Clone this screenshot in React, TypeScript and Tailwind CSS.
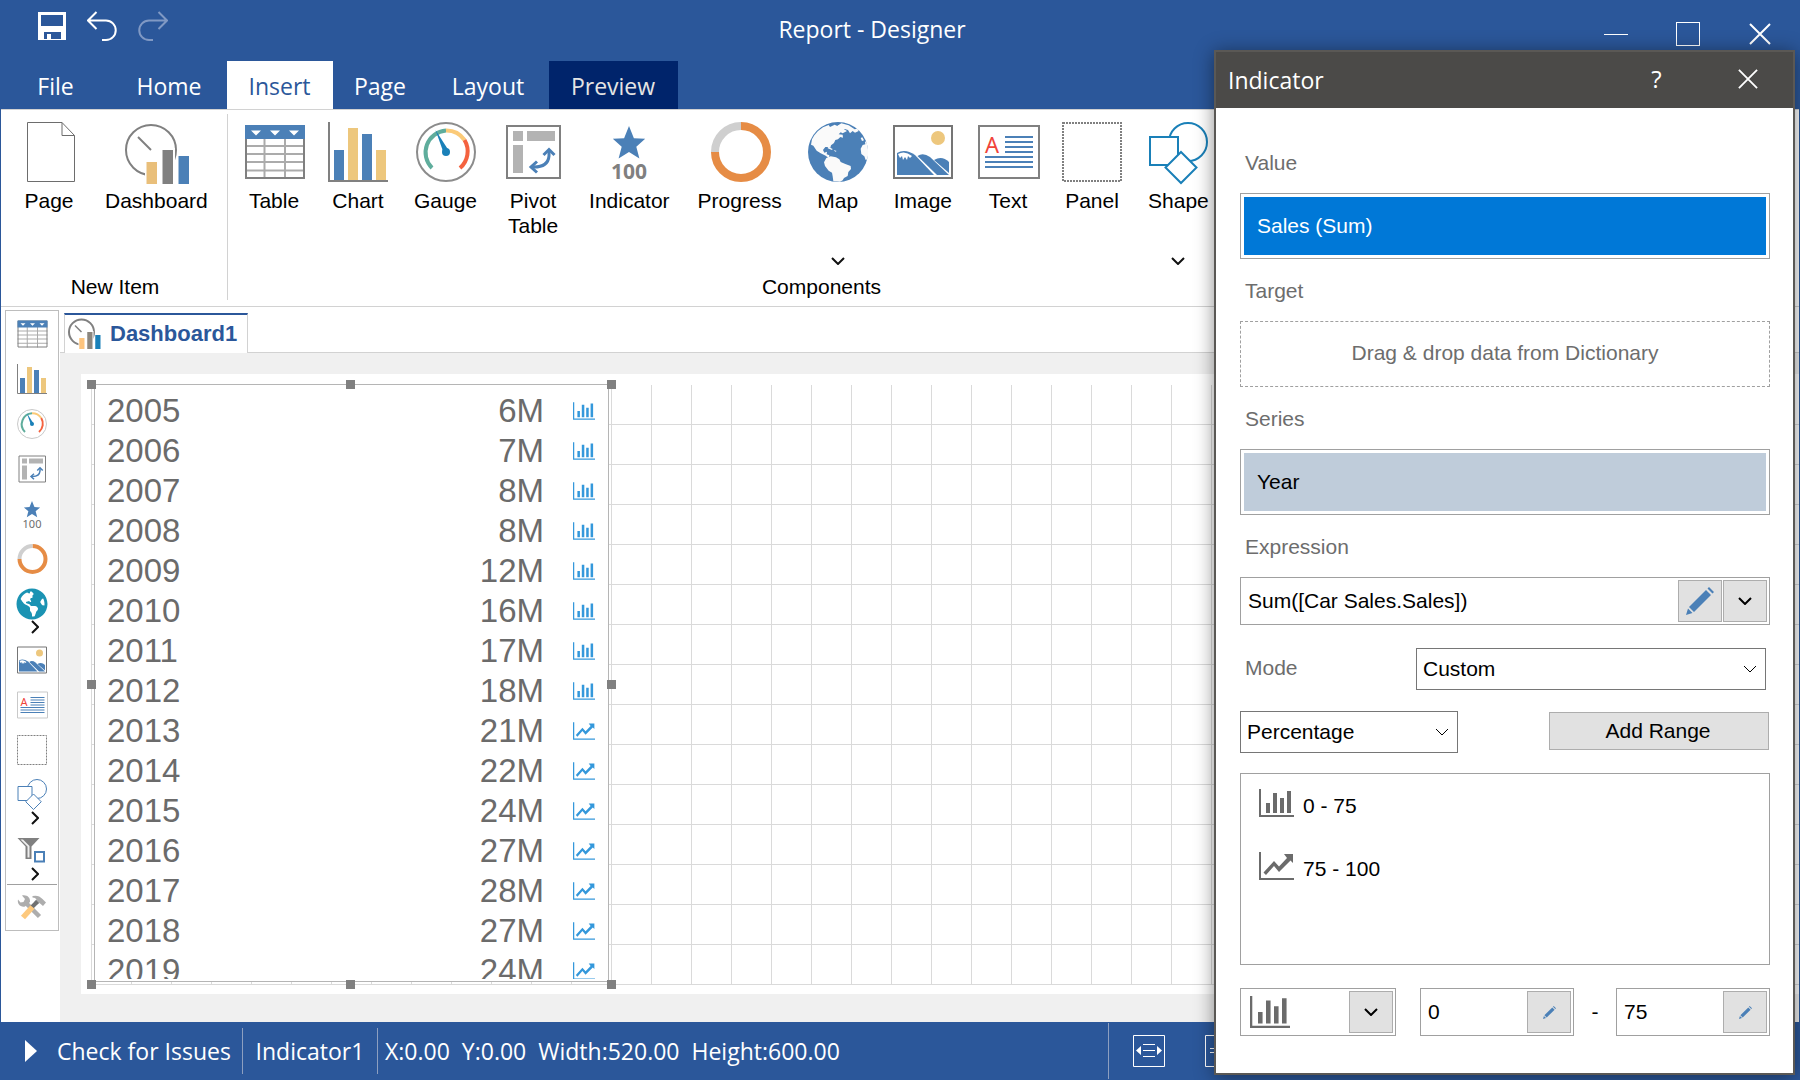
import React from "react";
import { FaGlobeAmericas } from "react-icons/fa";

const BLUE = "#4b80b7";
const GRAY = "#808080";
const SAND = "#edc77d";

type IconProps = { className?: string };

function Svg({ className = "size-16", children }: IconProps & { children: React.ReactNode }) {
  return (
    <svg viewBox="0 0 64 64" className={`${className} shrink-0 overflow-visible`} fill="none" aria-hidden="true">
      {children}
    </svg>
  );
}

function PageIcon(p: IconProps) {
  return (
    <Svg {...p}>
      <path d="M10.500 .5H45L57.500 13.500V59.500H10.500Z M45 .5V13.500H57.500" stroke="#6d6d6d" />
    </Svg>
  );
}

function DashboardIcon({ alt, ...p }: IconProps & { alt?: boolean }) {
  return (
    <Svg {...p}>
      <circle cx="27" cy="28" r="25" stroke={GRAY} strokeWidth={alt ? 4 : 2} />
      <path d="M14 15L27 28" stroke={GRAY} strokeWidth={alt ? 3 : 2} />
      <path d="M21 38H37V26H51V64H21Z" fill="#fff" />
      <path d="M22.500 40h10.500v22H22.500z" fill={alt ? "#fdc47e" : "#e9bf7a"} />
      <path d="M38.500 28H49V62H38.500z" fill={alt ? "#8c877f" : GRAY} />
      <path d="M54.500 34H65V62H54.500z" fill={alt ? "#1a80b8" : BLUE} />
    </Svg>
  );
}

function TableIcon(p: IconProps) {
  return (
    <Svg {...p}>
      <path d="M22.500 16V57M43 16V57M3 24H63M3 32H63M3 40H63M3 48.500H63" stroke="#ababab" strokeWidth="2" />
      <path d="M4 4H62V56H4Z" stroke={GRAY} strokeWidth="2" />
      <path d="M3 3H63V17H3Z" fill={BLUE} />
      <path d="M9 8.500h10l-5 5zM28 8.500h10l-5 5zM47 8.500h10l-5 5z" fill="#fff" />
    </Svg>
  );
}

function ChartIcon(p: IconProps) {
  return (
    <Svg {...p}>
      <path d="M3 0V59H62" stroke={GRAY} strokeWidth="2" />
      <path d="M8 28H18V58H8zM36 12H46V58H36z" fill={BLUE} />
      <path d="M22 6H32V58H22zM50 28H60V58H50z" fill={SAND} />
    </Svg>
  );
}

function GaugeIcon({ ring = "#8c8c8c", ...p }: IconProps & { ring?: string }) {
  return (
    <Svg {...p}>
      <circle cx="32" cy="30" r="29" stroke={ring} strokeWidth="2" />
      <path d="M18 46A22 22 0 0 1 32 8.500" stroke="#5fad9c" strokeWidth="4" />
      <path d="M32 8.500A22 22 0 0 1 50.500 18" stroke="#fbca78" strokeWidth="4" />
      <path d="M50.500 18A22 22 0 0 1 46 46" stroke="#f4623f" strokeWidth="4" />
      <path d="M21.500 8L30 32L35 29Z" fill="#1a80b8" />
      <circle cx="32" cy="30" r="4" fill="#1a80b8" />
    </Svg>
  );
}

function PivotIcon(p: IconProps) {
  return (
    <Svg {...p}>
      <path d="M6 4H59V56H6Z" stroke={GRAY} strokeWidth="2" />
      <path d="M12 9H22V19H12zM26 9H54V19H26zM12 23H22V51H12z" fill="#b3b3b3" />
      <path d="M48 28V34Q47 45 33 45H31" stroke={BLUE} strokeWidth="3" />
      <path d="M42.500 33L48 27.500L53.500 33M36 39.500L30 45L36 50.500" stroke={BLUE} strokeWidth="3" />
    </Svg>
  );
}

function IndicatorIcon({ light, ...p }: IconProps & { light?: boolean }) {
  return (
    <Svg {...p}>
      <path d="M32 4L36.900 16.200L48.200 16.800L39.300 24.700L42.400 36.500L32 30L21.600 36.500L24.700 24.700L15.800 16.800L27.100 16.200Z" fill={BLUE} />
      <text x="32" y="57" textAnchor="middle" fontSize={light ? 22 : 21} fontWeight={light ? 400 : 700} fill={light ? "#6d6d6d" : GRAY} fontFamily="Noto Sans, sans-serif">
        100
      </text>
    </Svg>
  );
}

function ProgressIcon(p: IconProps) {
  return (
    <Svg {...p}>
      <path d="M33 4A26 26 0 1 1 7 30" stroke="#e68c45" strokeWidth="8" />
      <path d="M7 30A26 26 0 0 1 33 4" stroke="#cfcfcf" strokeWidth="8" />
    </Svg>
  );
}

function GlobeIcon(p: IconProps) {
  return (
    <svg viewBox="-6 0 192 192" className={`${p.className ?? "size-16"} shrink-0`} aria-hidden="true">
      <circle cx="90" cy="90" r="90" fill={BLUE} />
      <g fill="#fafafa">
        <path d="M30 27L45 16L62 9L66 15L80 8L88 12L98 7L108 13L114 10L118 18L108 22L117 27L104 34L98 31L92 37L104 38L105 47L97 45L90 52L82 54L78 63L69 70L66 81L63 75L52 75L45 84L49 92L57 89L56 97L64 100L63 109L53 101L38 94L26 86L16 71L9 68L12 52L19 40Z" />
        <path d="M88 12L100 4L122 10L140 22L148 20L152 27L141 32L134 27L126 34L120 24L108 20Z" />
        <path d="M60 74L74 81L72 84L59 79ZM77 84L86 87L82 89Z" />
        <path d="M55 108L68 103L84 106L94 112L98 120L112 126L128 132L129 141L121 150L119 162L108 168L104 175L96 179L76 178L74 163L72 152L62 146L51 132L48 121Z" />
        <path d="M178 55L171 60L172 67L164 69L158 80L160 96L169 103L173 114L178 112A90 90 0 0 0 175 60ZM158 48L163 46L168 55L162 57Z" />
      </g>
    </svg>
  );
}

function ImageIcon(p: IconProps) {
  return (
    <Svg {...p}>
      <path d="M3 4H61V56H3Z" stroke="#757575" strokeWidth="2" />
      <circle cx="47" cy="16" r="7" fill={SAND} />
      <path d="M6 53V31Q14 26 24 33L43 53Z" fill={BLUE} />
      <path d="M26.500 34Q32 30 39 35L58 53H46Z" fill={BLUE} />
      <path d="M43 38Q51 33 58 40V51Z" fill={BLUE} />
      <path d="M7 32Q14 28 21 34L19 36L17 34L16 38L14 35L12 38L11 34L9 36Z" fill="#fff" />
    </Svg>
  );
}

function TextIcon({ frame = GRAY, ...p }: IconProps & { frame?: string }) {
  return (
    <Svg {...p}>
      <path d="M3 4H63V56H3Z" stroke={frame} strokeWidth="2" />
      <text x="9" y="31" fontSize="22" fill="#f0443a" fontFamily="Noto Sans, sans-serif">
        A
      </text>
      <path d="M29 15H57M29 20H57M29 25H57M29 30H57M9 35H57M9 40H57M9 45H57" stroke={BLUE} strokeWidth="2" />
    </Svg>
  );
}

function PanelIcon(p: IconProps) {
  return (
    <Svg {...p}>
      <path d="M3 1H61V59H3Z" stroke={GRAY} strokeWidth="2" strokeDasharray="2 1" />
    </Svg>
  );
}

function ShapeIcon({ color = "#1a80b8", ...p }: IconProps & { color?: string }) {
  return (
    <Svg {...p}>
      <circle cx="42" cy="20" r="19" stroke={color} strokeWidth="2" fill="#fff" />
      <path d="M4 15H32V43H4Z" stroke={color} strokeWidth="2" fill="#fff" />
      <path d="M35 30L50.500 45.500L35 61L19.500 45.500Z" stroke={color} strokeWidth="2" fill="#fff" />
    </Svg>
  );
}

function FilterIcon(p: IconProps) {
  return (
    <Svg {...p}>
      <path d="M3 6H47L31 23V48H19V23Z" fill={GRAY} />
      <path d="M9 9L23 23V45H27V22L14 9Z" fill="#eee" />
      <path d="M38 34H56V53H38Z" stroke={BLUE} strokeWidth="4" fill="#fff" />
    </Svg>
  );
}

function ToolsIcon(p: IconProps) {
  return (
    <Svg {...p}>
      <path d="M17 17L47 47" stroke="#adadad" strokeWidth="9" />
      <path d="M12 5L18 12L15 18L9 19L4 13C2 22 9 29 18 27L28 18C29 9 22 3 12 5Z" fill="#adadad" />
      <path d="M33 6Q45 3 53 12L60 19L54 26L47 20L41 24L36 18L41 13Q39 9 33 9Z" fill="#adadad" />
      <path d="M43 17L30 30" stroke="#707070" strokeWidth="8" />
      <path d="M33 28L14 49" stroke="#fdc97e" strokeWidth="11" />
    </Svg>
  );
}

function BarsGlyph({ className }: IconProps) {
  return (
    <svg viewBox="0 0 35 28" className={className} aria-hidden="true" fill="currentColor">
      <path d="M0 0H2V26H35V28H0ZM7 14H11V24H7ZM14 4H18V24H14ZM21 9H25V24H21ZM28 2H32V24H28Z" />
    </svg>
  );
}

function TrendGlyph({ className }: IconProps) {
  return (
    <svg viewBox="0 0 35 28" className={className} aria-hidden="true" fill="currentColor">
      <path d="M0 0H2V26H35V28H0ZM25 2H34V11L31.500 8.500L20 20L15 14L7 23L4.500 20.500L15 9L20 14.500L28 6Z" />
    </svg>
  );
}

function ChevronDown({ className = "h-2 w-3.5" }: IconProps) {
  return (
    <svg viewBox="0 0 14 8" className={className} fill="none" stroke="currentColor" strokeWidth="2" aria-hidden="true">
      <path d="M1 1L7 7L13 1" />
    </svg>
  );
}

function ChevronRight() {
  return (
    <svg viewBox="0 0 8 14" className="ml-1.5 h-3.5 w-2 shrink-0" fill="none" stroke="#111" strokeWidth="2" aria-hidden="true">
      <path d="M1 1L7 7L1 13" />
    </svg>
  );
}

function Pencil({ className }: IconProps) {
  return (
    <svg viewBox="0 0 28 28" className={className} fill={BLUE} aria-hidden="true">
      <path d="M0 28L2 21.500L6.500 26ZM3 20L20 3L25 8L8 25ZM21.500 1.500L23 0L28 5L26.500 6.500Z" />
    </svg>
  );
}

function Cross({ className }: IconProps) {
  return (
    <svg viewBox="0 0 22 22" className={className} fill="none" stroke="currentColor" strokeWidth="2" aria-hidden="true">
      <path d="M1 1L21 21M21 1L1 21" />
    </svg>
  );
}

const UI_FONT = "font-['Open_Sans','Noto_Sans',sans-serif]";

function TitleBar() {
  return (
    <header className={`flex h-[61px] bg-[#2b579a] text-white ${UI_FONT}`}>
      <div className="flex w-[164px] shrink-0 items-start gap-[21px] pl-[38px] pt-[11px]">
        <button aria-label="Save">
          <svg viewBox="0 0 28 30" className="h-[30px] w-7" aria-hidden="true">
            <path fillRule="evenodd" fill="#fff" d="M0 1H28V29H0ZM3 4V15H25V4ZM6 21V28H9V23H13V28H23V21Z" />
          </svg>
        </button>
        <button aria-label="Undo">
          <svg viewBox="0 0 30 30" className="size-[30px]" fill="none" stroke="#fff" strokeWidth="2" aria-hidden="true">
            <path d="M9.500 1L1 9.500L9.500 18M1 9.500H19A9.700 9.700 0 0 1 19 29H15" />
          </svg>
        </button>
        <button aria-label="Redo" disabled>
          <svg viewBox="0 0 30 30" className="size-[30px]" fill="none" stroke="#8099c4" strokeWidth="2" aria-hidden="true">
            <path d="M20.500 1L29 9.500L20.500 18M29 9.500H11A9.700 9.700 0 0 0 11 29H15" />
          </svg>
        </button>
      </div>
      <h1 className="flex-1 pt-[13px] text-center text-[23px] leading-8">Report - Designer</h1>
      <div className="flex w-[220px] shrink-0 items-start pt-[22px]">
        <button aria-label="Minimize" className="flex h-6 w-[72px] items-center justify-center">
          <span className="h-px w-6 bg-white" />
        </button>
        <button aria-label="Maximize" className="flex h-6 w-[72px] items-center justify-center">
          <span className="size-6 border border-white" />
        </button>
        <button aria-label="Close" className="flex h-6 w-[72px] items-center justify-center">
          <Cross className="size-[22px]" />
        </button>
      </div>
    </header>
  );
}

const TABS = [
  { name: "File", style: "w-[112px] text-white" },
  { name: "Home", style: "w-[115px] text-white" },
  { name: "Insert", style: "w-[106px] bg-white text-[#2b579a]" },
  { name: "Page", style: "w-[95px] text-white" },
  { name: "Layout", style: "w-[121px] text-white" },
  { name: "Preview", style: "w-[129px] bg-[#00246b] text-[#e4e4e4]" },
];

function Tabs() {
  return (
    <nav className={`flex h-12 bg-[#2b579a] ${UI_FONT}`} role="tablist">
      {TABS.map((t) => (
        <button key={t.name} role="tab" aria-selected={t.name === "Insert"} className={`${t.style} pr-px pt-0.5 text-center text-[23px]`}>
          {t.name}
        </button>
      ))}
    </nav>
  );
}

function RibbonItem({ label, icon, menu }: { label: string; icon: React.ReactNode; menu?: boolean }) {
  return (
    <button className="flex h-[155px] min-w-[84px] flex-col items-center px-3.5 pt-3 text-[21px] leading-[25px] text-black">
      <span className="flex w-[54px] justify-center">{icon}</span>
      <span className="mt-0.5">
        {label.split(" ").map((w) => (
          <span key={w} className="block">
            {w}
          </span>
        ))}
      </span>
      {menu && <ChevronDown className="mt-auto h-2 w-3.5 text-[#111]" />}
    </button>
  );
}

function Ribbon() {
  return (
    <section className="flex h-[198px] border-y border-[#d2d2d2] bg-white">
      <div className="mt-1 flex h-[186px] w-[227px] shrink-0 flex-col border-r border-[#d2d2d2] pl-1.5">
        <div className="-mt-1 flex h-40">
          <RibbonItem label="Page" icon={<PageIcon />} />
          <RibbonItem label="Dashboard" icon={<DashboardIcon />} />
        </div>
        <div className="mt-1 pr-1 text-center text-[21px] leading-[25px]">New Item</div>
      </div>
      <div className="flex shrink-0 flex-col pl-1">
        <div className="flex h-40">
          <RibbonItem label="Table" icon={<TableIcon />} />
          <RibbonItem label="Chart" icon={<ChartIcon />} />
          <RibbonItem label="Gauge" icon={<GaugeIcon />} />
          <RibbonItem label="Pivot Table" icon={<PivotIcon />} />
          <RibbonItem label="Indicator" icon={<IndicatorIcon />} />
          <RibbonItem label="Progress" icon={<ProgressIcon />} />
          <RibbonItem label="Map" icon={<GlobeIcon />} menu />
          <RibbonItem label="Image" icon={<ImageIcon />} />
          <RibbonItem label="Text" icon={<TextIcon />} />
          <RibbonItem label="Panel" icon={<PanelIcon />} />
          <RibbonItem label="Shape" icon={<ShapeIcon />} menu />
        </div>
        <div className="mt-1 w-[1179px] text-center text-[21px] leading-[25px]">Components</div>
      </div>
    </section>
  );
}

function Tool({ label, children }: { label: string; children: React.ReactNode }) {
  return (
    <button aria-label={label} className="flex h-[45px] w-full items-center justify-center pt-0.5">
      {children}
    </button>
  );
}

function MenuTool({ label, children }: { label: string; children: React.ReactNode }) {
  return (
    <button aria-label={label} className="flex h-[56px] w-full flex-col items-center justify-end pb-[3px]">
      {children}
      <ChevronRight />
    </button>
  );
}

function Toolbox() {
  return (
    <aside className="w-[59px] shrink-0 bg-white pl-1 pr-px pt-[3px]">
      <div className="flex flex-col border border-[#bdbdbd]">
        <Tool label="Table"><TableIcon className="size-8" /></Tool>
        <Tool label="Chart"><ChartIcon className="size-8" /></Tool>
        <Tool label="Gauge"><GaugeIcon className="size-8" ring="#c9c9c9" /></Tool>
        <Tool label="Pivot Table"><PivotIcon className="size-8" /></Tool>
        <Tool label="Indicator"><IndicatorIcon className="size-8" light /></Tool>
        <Tool label="Progress"><ProgressIcon className="size-8" /></Tool>
        <MenuTool label="Map"><FaGlobeAmericas className="size-8 shrink-0 text-[#1b93b3]" /></MenuTool>
        <Tool label="Image"><ImageIcon className="size-8" /></Tool>
        <Tool label="Text"><TextIcon className="size-8" frame="#c9c9c9" /></Tool>
        <Tool label="Panel"><PanelIcon className="size-8" /></Tool>
        <MenuTool label="Shape"><ShapeIcon className="size-8" color={BLUE} /></MenuTool>
        <MenuTool label="Filter"><FilterIcon className="size-8" /></MenuTool>
        <div className="mx-px border-t border-[#a0a0a0]" />
        <Tool label="Setup"><ToolsIcon className="size-8" /></Tool>
      </div>
    </aside>
  );
}

const SALES: [number, number][] = [
  [2005, 6], [2006, 7], [2007, 8], [2008, 8], [2009, 12], [2010, 16], [2011, 17], [2012, 18],
  [2013, 21], [2014, 22], [2015, 24], [2016, 27], [2017, 28], [2018, 27], [2019, 24],
];

const HANDLES = [
  "-left-1 -top-1", "left-[255px] -top-1", "-right-1 -top-1", "-left-1 top-[296px]",
  "-right-1 top-[296px]", "-left-1 -bottom-1", "left-[255px] -bottom-1", "-right-1 -bottom-1",
];

function Canvas() {
  return (
    <div className="mt-[21px] ml-[21px] bg-white py-2.5 pl-2.5">
      <div className="flex h-[600px] flex-col">
        <div className="mt-px flex-1 bg-[linear-gradient(to_right,#dadada_1px,transparent_1px),linear-gradient(to_bottom,#dadada_1px,transparent_1px)] bg-[size:40px_40px] bg-[position:0_-1px]">
          <div className="relative -mt-px h-[601px] w-[521px] px-[3px]">
            <div className="h-[598px] overflow-hidden border border-[#b5b5b5] bg-white pt-1.5">
              <div className="h-[588px] overflow-hidden">
                <table className="w-full text-[33px] text-[#6b6b6b]">
                  <tbody>
                    {SALES.map(([year, value]) => (
                      <tr key={year} className="h-10 leading-10">
                        <th scope="row" className="p-0 pl-3 text-left font-normal">{year}</th>
                        <td className="p-0 text-right">{value}M</td>
                        <td className="w-16 p-0 pl-[29px]">
                          {value < 20 ? <BarsGlyph className="h-[18px] w-[22px] text-[#3498db]" /> : <TrendGlyph className="h-[18px] w-[22px] text-[#3498db]" />}
                        </td>
                      </tr>
                    ))}
                  </tbody>
                </table>
              </div>
            </div>
            {HANDLES.map((h) => (
              <span key={h} className={`absolute size-[9px] bg-[#808080] ${h}`} />
            ))}
          </div>
        </div>
      </div>
    </div>
  );
}

function Workspace() {
  return (
    <main className="flex flex-1">
      <Toolbox />
      <div className="flex min-w-0 flex-1 flex-col">
        <div className="flex h-[46px] items-stretch bg-white pt-1.5">
          <div className="w-1 border-b border-[#d2d2d2]" />
          <button className="flex w-[184px] items-center border-x border-t-2 border-x-[#d2d2d2] border-t-[#2b579a] pb-0.5 pl-[3px] text-[22px] font-bold text-[#2b579a]">
            <DashboardIcon className="mt-0.5 size-8" alt />
            <span className="ml-2.5">Dashboard1</span>
          </button>
          <div className="flex-1 border-b border-[#d2d2d2]" />
        </div>
        <div className="flex-1 bg-[#f0f0f0]">
          <Canvas />
        </div>
      </div>
    </main>
  );
}

function StatusBar() {
  return (
    <footer className={`flex h-[58px] items-center bg-[#2b579a] text-[23px] text-white ${UI_FONT}`}>
      <button className="flex h-[46px] w-[243px] items-center border-r border-[#8d9fc0] pl-[25px]">
        <svg viewBox="0 0 12 22" className="h-[22px] w-3" fill="#fff" aria-hidden="true">
          <path d="M0 0L12 11L0 22Z" />
        </svg>
        <span className="ml-5 whitespace-nowrap pt-px">Check for Issues</span>
      </button>
      <span className="flex h-[46px] w-[135px] items-center justify-center border-r border-[#8d9fc0] pt-px">Indicator1</span>
      <span className="ml-[7px] flex gap-3 pt-px">
        <span>X:0.00</span>
        <span>Y:0.00</span>
        <span>Width:520.00</span>
        <span>Height:600.00</span>
      </span>
      <div className="ml-auto flex h-14 w-[692px] items-center gap-10 border-l border-[#8d9fc0] pl-6">
        <button aria-label="Fit page width">
          <svg viewBox="0 0 32 32" className="size-8" aria-hidden="true">
            <path d="M.5 .5H31.500V31.500H.5ZM10 9.500H22M10 15.500H22M10 21.500H22" stroke="#fff" fill="none" />
            <path d="M8 11V20L3 15.500ZM24 11V20L29 15.500Z" fill="#fff" />
          </svg>
        </button>
        <button aria-label="Fit whole page">
          <svg viewBox="0 0 32 32" className="size-8" aria-hidden="true">
            <path d="M.5 .5H31.500V31.500H.5ZM5 13.500H27M5 17.500H27" stroke="#fff" fill="none" />
          </svg>
        </button>
      </div>
    </footer>
  );
}

const LABEL = "block pl-[5px] leading-[25px] text-[#6d6d6d]";
const BOX = "border border-[#a0a0a0] bg-white";
const SQUARE = "flex h-[42px] w-11 shrink-0 items-center justify-center border border-[#adadad] bg-[#e1e1e1]";

function RangeField({ label, value }: { label: string; value: string }) {
  return (
    <div className={`flex h-12 w-[154px] items-center pr-0.5 ${BOX}`}>
      <input aria-label={label} defaultValue={value} className="min-w-0 flex-1 pl-[7px] outline-none" />
      <button aria-label={`Edit ${label}`} className={SQUARE}>
        <Pencil className="size-[13px]" />
      </button>
    </div>
  );
}

function Dialog() {
  return (
    <div
      role="dialog"
      aria-label="Indicator"
      className="absolute right-[5px] top-[50px] w-[581px] border-2 border-[#5a5855] bg-white text-[21px] text-black shadow-[0_2px_18px_rgba(0,0,0,0.45)]"
    >
      <div className={`flex h-14 items-center bg-[#4b4a48] pl-3 text-white ${UI_FONT}`}>
        <h2 className="flex-1 text-[23px]">Indicator</h2>
        <button aria-label="Help" className="w-[91px] pb-0.5 text-center text-2xl">?</button>
        <button aria-label="Close dialog" className="flex w-[91px] justify-center pb-0.5">
          <Cross className="size-5" />
        </button>
      </div>
      <div className="pb-[37px] pl-6 pr-[23px] pt-[42px]">
        <span className={LABEL}>Value</span>
        <div className={`mt-[18px] h-[66px] p-[3px] ${BOX}`}>
          <button className="h-full w-full bg-[#0078d7] pl-[13px] text-left text-white">Sales (Sum)</button>
        </div>
        <span className={`mt-[19px] ${LABEL}`}>Target</span>
        <div className="mt-[18px] flex h-[66px] items-center justify-center border border-dashed border-[#a0a0a0] pb-0.5 text-[#6d6d6d]">
          Drag &amp; drop data from Dictionary
        </div>
        <span className={`mt-[19px] ${LABEL}`}>Series</span>
        <div className={`mt-[18px] h-[66px] p-[3px] ${BOX}`}>
          <button className="h-full w-full bg-[#bfccda] pl-[13px] text-left">Year</button>
        </div>
        <label htmlFor="expression" className={`mt-[19px] ${LABEL}`}>Expression</label>
        <div className={`mt-[18px] flex h-12 items-center gap-px pr-0.5 ${BOX}`}>
          <input id="expression" defaultValue="Sum([Car Sales.Sales])" className="min-w-0 flex-1 pl-[7px] outline-none" />
          <button aria-label="Edit expression" className={SQUARE}><Pencil className="size-7" /></button>
          <button aria-label="Expression functions" className={SQUARE}><ChevronDown /></button>
        </div>
        <div className="mt-[23px] flex items-center justify-between pr-1">
          <label htmlFor="mode" className={`pb-1 ${LABEL}`}>Mode</label>
          <div className="relative w-[350px]">
            <select id="mode" className="h-[42px] w-full appearance-none border border-[#767676] bg-white pl-1.5">
              <option>Custom</option>
            </select>
            <ChevronDown className="pointer-events-none absolute right-[9px] top-[17px] h-2 w-3.5 stroke-1" />
          </div>
        </div>
        <div className="mt-[21px] flex items-start justify-between pr-px">
          <div className="relative w-[218px]">
            <select aria-label="Range type" className="h-[42px] w-full appearance-none border border-[#767676] bg-white pl-1.5">
              <option>Percentage</option>
            </select>
            <ChevronDown className="pointer-events-none absolute right-[9px] top-[17px] h-2 w-3.5 stroke-1" />
          </div>
          <button className="mt-px h-[38px] w-[220px] border border-[#adadad] bg-[#e1e1e1] pr-0.5">Add Range</button>
        </div>
        <ul className={`mt-5 h-48 pl-[18px] ${BOX}`}>
          <li className="flex h-[63px] items-center gap-[9px] pb-1.5">
            <BarsGlyph className="h-7 w-[35px] text-[#6b6b6b]" />
            <span className="mt-1.5">0 - 75</span>
          </li>
          <li className="flex h-[63px] items-center gap-[9px] pb-1.5">
            <TrendGlyph className="h-7 w-[35px] text-[#6b6b6b]" />
            <span className="mt-1.5">75 - 100</span>
          </li>
        </ul>
        <div className="mt-[23px] flex items-center">
          <div className={`mr-6 flex h-12 w-[156px] items-center justify-between pl-[9px] pr-0.5 ${BOX}`}>
            <BarsGlyph className="h-8 w-10 text-[#6b6b6b]" />
            <button aria-label="Choose icon" className={SQUARE}><ChevronDown /></button>
          </div>
          <RangeField label="Range start" value="0" />
          <span className="flex-1 text-center">-</span>
          <RangeField label="Range end" value="75" />
        </div>
      </div>
    </div>
  );
}

export default function App() {
  return (
    <div className="relative flex min-h-screen flex-col overflow-hidden bg-[#2b579a] font-['Liberation_Sans',Arial,sans-serif]">
      <TitleBar />
      <Tabs />
      <div className="mx-px flex flex-1 flex-col bg-white">
        <Ribbon />
        <Workspace />
      </div>
      <StatusBar />
      <Dialog />
    </div>
  );
}
